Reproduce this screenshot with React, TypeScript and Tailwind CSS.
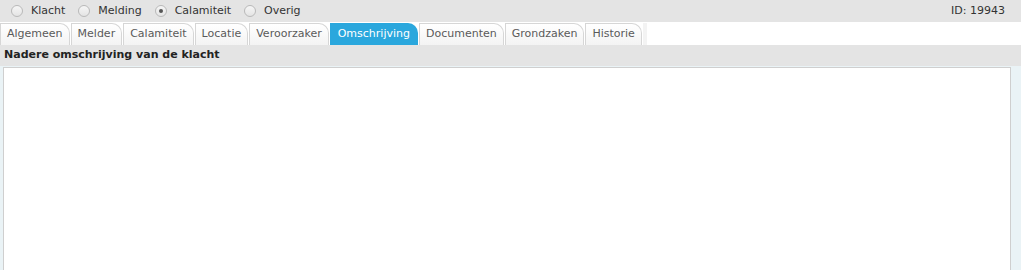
import React from "react";

const tabs = [
  "Algemeen",
  "Melder",
  "Calamiteit",
  "Locatie",
  "Veroorzaker",
  "Omschrijving",
  "Documenten",
  "Grondzaken",
  "Historie",
];

function Radio({ label, checked }: { label: string; checked?: boolean }) {
  return (
    <label className="flex items-center gap-[8px] mr-[13px]">
      <span className="w-[12px] h-[12px] rounded-full border border-[#b9b9b9] bg-gradient-to-b from-[#f6f6f6] to-[#e4e4e4] flex items-center justify-center">
        {checked && <span className="w-[4px] h-[4px] rounded-full bg-[#555]" />}
      </span>
      <span>{label}</span>
    </label>
  );
}

export default function App() {
  return (
    <div
      className="w-[1021px] h-[270px] overflow-hidden bg-white text-[11px] text-[#333]"
      style={{ fontFamily: '"DejaVu Sans", Verdana, sans-serif' }}
    >
      <div className="h-[22px] bg-[#e4e4e4] flex items-center pl-[11px] pr-[16px]">
        <Radio label="Klacht" />
        <Radio label="Melding" />
        <Radio label="Calamiteit" checked />
        <Radio label="Overig" />
        <div className="ml-auto text-[#333]">ID: 19943</div>
      </div>
      <div className="h-[23px] flex items-end bg-white">
        {tabs.map((t) => {
          const active = t === "Omschrijving";
          return (
            <div
              key={t}
              className={
                active
                  ? "h-[22px] mr-px flex items-center pl-[7px] pr-[8px] rounded-tr-[10px] bg-[#2aa7dd] text-white border-l border-[#2aa7dd]"
                  : "h-[22px] mr-px flex items-center pl-[6px] pr-[6px] rounded-tr-[10px] bg-gradient-to-b from-white to-[#f3f3f3] text-[#5a5a5a] border-l border-t border-r border-[#d6d6d6]"
              }
            >
              {t}
            </div>
          );
        })}
        <div className="h-[22px] w-[4px] bg-[#f3f3f3]" />
      </div>
      <div className="h-[21px] bg-[#e4e4e4] flex items-center pl-[4px] font-bold text-[#222]">
        Nadere omschrijving van de klacht
      </div>
      <div className="flex h-[204px] bg-[#eaf3f6]">
        <div className="w-[3px]" />
        <div className="mt-[1px] flex-1 bg-white border border-[#cfcfcf] border-b-0" />
        <div className="w-[10px]" />
      </div>
    </div>
  );
}
